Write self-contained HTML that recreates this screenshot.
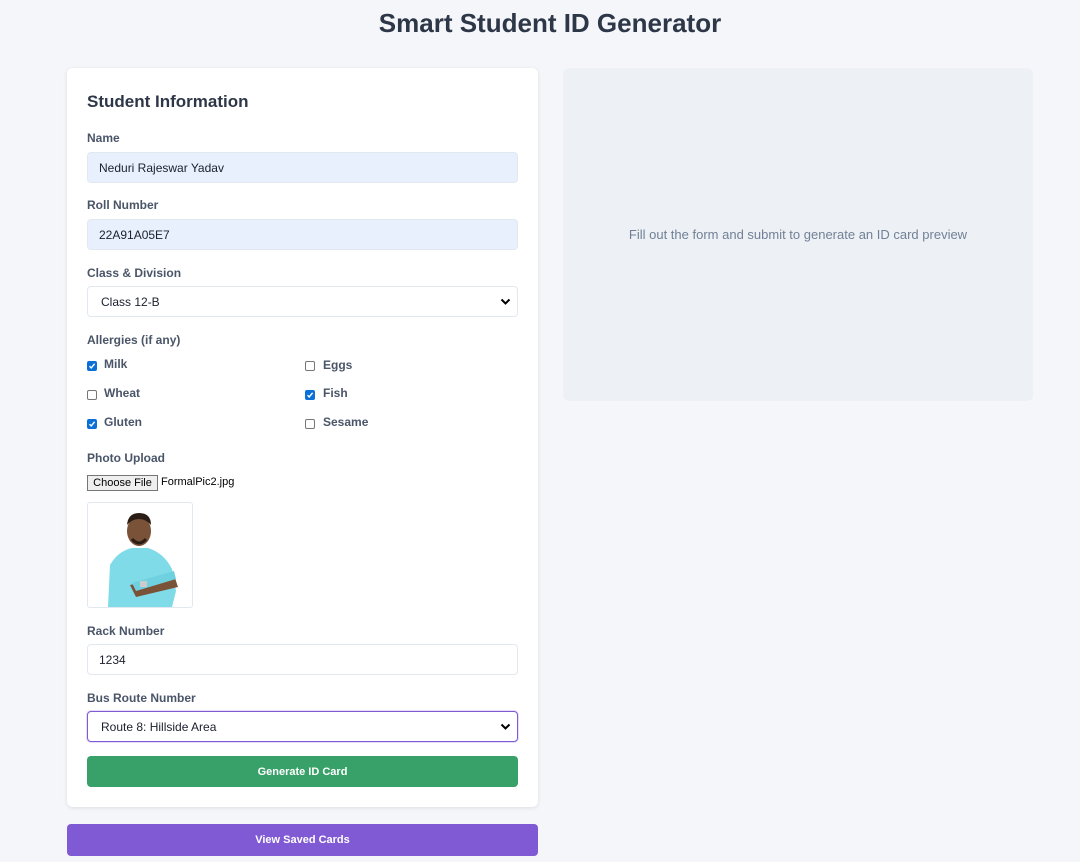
<!DOCTYPE html>
<html><head><meta charset="utf-8"><style>
*{box-sizing:border-box;margin:0;padding:0}
body{width:1080px;height:862px;background:#f4f6fa;font-family:"Liberation Sans",sans-serif;position:relative;overflow:hidden;color:#2d3748}
.a{position:absolute}
h1{position:absolute;left:0;width:1100px;top:8px;text-align:center;font-size:26px;font-weight:bold;color:#2d3748}
.card{left:67px;top:68px;width:471px;height:739px;background:#fff;border-radius:6px;box-shadow:0 1px 4px rgba(0,0,0,.1)}
.lbl{left:87px;font-size:12px;font-weight:bold;color:#4a5568}
.in{left:87px;width:431px;height:31px;border:1px solid #e2e8f0;border-radius:4px;font-size:12px;color:#1a202c;padding-left:11px;line-height:31px}
.blue{background:#e8f0fe}
.sel{padding-left:13px;background:#fff}
.chev{position:absolute;right:6px;top:11px}
.cb{width:10px;height:10px;border:1px solid #767676;border-radius:2px;background:#fff}
.cb.on{background:#0b6fd8;border-color:#0b6fd8}
.ct{font-size:12px;font-weight:bold;color:#4a5568}
.btn{left:87px;width:431px;height:31px;border-radius:4px;color:#fff;font-size:11px;font-weight:bold;text-align:center;line-height:32px}
</style></head><body>
<h1>Smart Student ID Generator</h1>
<div class="a card"></div>
<div class="a" style="left:87px;top:92px;font-size:17px;font-weight:bold;color:#2d3748">Student Information</div>
<div class="a lbl" style="top:131px">Name</div>
<div class="a in blue" style="top:152px">Neduri Rajeswar Yadav</div>
<div class="a lbl" style="top:198px">Roll Number</div>
<div class="a in blue" style="top:219px">22A91A05E7</div>
<div class="a lbl" style="top:266px">Class &amp; Division</div>
<div class="a in sel" style="top:286px">Class 12-B<svg class="chev" width="11" height="8" viewBox="0 0 11 8"><path d="M1.5 1.5L5.5 5.5L9.5 1.5" stroke="#000" stroke-width="2" fill="none"/></svg></div>
<div class="a lbl" style="top:333px">Allergies (if any)</div>
<div class="a cb on" style="left:87px;top:361px"><svg width="8" height="8" viewBox="0 0 8 8" style="display:block"><path d="M1.5 4.2L3.2 6L6.6 1.8" stroke="#fff" stroke-width="1.4" fill="none"/></svg></div><div class="a ct" style="left:104px;top:357px">Milk</div>
<div class="a cb" style="left:305px;top:361px"></div><div class="a ct" style="left:323px;top:358px">Eggs</div>
<div class="a cb" style="left:87px;top:390px"></div><div class="a ct" style="left:104px;top:386px">Wheat</div>
<div class="a cb on" style="left:305px;top:390px"><svg width="8" height="8" viewBox="0 0 8 8" style="display:block"><path d="M1.5 4.2L3.2 6L6.6 1.8" stroke="#fff" stroke-width="1.4" fill="none"/></svg></div><div class="a ct" style="left:323px;top:386px">Fish</div>
<div class="a cb on" style="left:87px;top:419px"><svg width="8" height="8" viewBox="0 0 8 8" style="display:block"><path d="M1.5 4.2L3.2 6L6.6 1.8" stroke="#fff" stroke-width="1.4" fill="none"/></svg></div><div class="a ct" style="left:104px;top:415px">Gluten</div>
<div class="a cb" style="left:305px;top:419px"></div><div class="a ct" style="left:323px;top:415px">Sesame</div>
<div class="a lbl" style="top:451px">Photo Upload</div>
<div class="a" style="left:87px;top:475px;width:71px;height:16px;border:1px solid #767676;background:#efefef;font-size:11px;text-align:center;line-height:14px;color:#000">Choose File</div>
<div class="a" style="left:161px;top:476px;font-size:11px;color:#000">FormalPic2.jpg</div>
<div class="a" style="left:87px;top:502px;width:106px;height:106px;border:1px solid #e2e8f0;border-radius:3px;background:#fff;overflow:hidden">
<svg width="104" height="104" viewBox="0 0 104 104"><path d="M20 104L22 62Q30 48 44 45L60 45Q76 50 84 66L88 88L84 104Z" fill="#7fdbe8"/><ellipse cx="51" cy="28" rx="12" ry="15" fill="#7a5238"/><path d="M39 22Q40 10 51 10Q63 10 63 22Q58 16 51 16Q44 16 39 22Z" fill="#2a1d16"/><path d="M44 36Q51 44 58 36" stroke="#2a1d16" stroke-width="3" fill="none"/><path d="M42 82L86 72L90 84L48 94Z" fill="#7a5238"/><path d="M44 80L86 68L88 76L48 88Z" fill="#6fd0e0"/><rect x="52" y="78" width="7" height="6" fill="#ccc"/></svg></div>
<div class="a lbl" style="top:624px">Rack Number</div>
<div class="a in" style="top:644px">1234</div>
<div class="a lbl" style="top:691px">Bus Route Number</div>
<div class="a in sel" style="top:711px;border-color:#805ad5;box-shadow:0 0 0 1px rgba(128,90,213,.2)">Route 8: Hillside Area<svg class="chev" width="11" height="8" viewBox="0 0 11 8"><path d="M1.5 1.5L5.5 5.5L9.5 1.5" stroke="#000" stroke-width="2" fill="none"/></svg></div>
<div class="a btn" style="top:756px;background:#38a169">Generate ID Card</div>
<div class="a btn" style="left:67px;width:471px;top:824px;height:32px;line-height:33px;background:#805ad5">View Saved Cards</div>
<div class="a" style="left:563px;top:68px;width:470px;height:333px;background:#edf1f5;border-radius:6px;text-align:center;line-height:333px;font-size:13px;color:#718096">Fill out the form and submit to generate an ID card preview</div>
</body></html>
